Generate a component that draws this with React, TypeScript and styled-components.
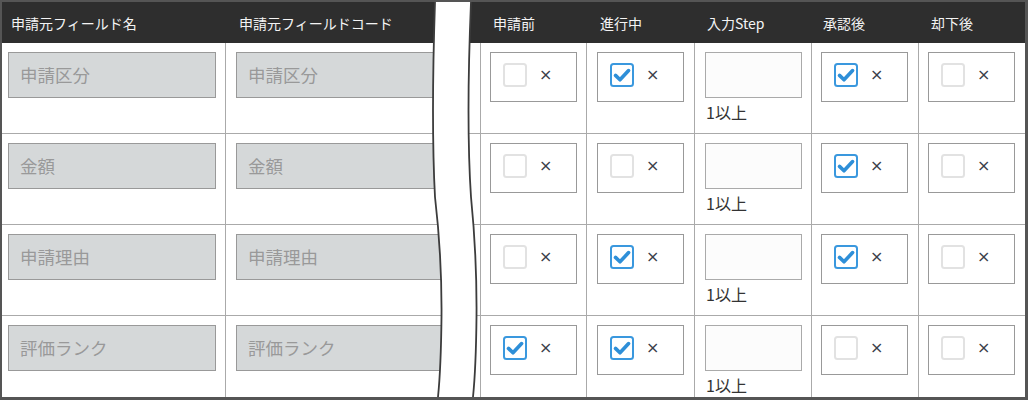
import React from 'react';
import styled, { createGlobalStyle } from 'styled-components';

const GlobalStyle = createGlobalStyle`
  html, body {
    margin: 0;
    padding: 0;
    background: #fff;
  }
  body {
    font-family: "Noto Sans CJK JP", "Noto Sans", sans-serif;
  }
`;

interface Row {
  name: string;
  before: boolean;
  progress: boolean;
  approved: boolean;
  rejected: boolean;
}

const rows: Row[] = [
  { name: '申請区分', before: false, progress: true, approved: true, rejected: false },
  { name: '金額', before: false, progress: false, approved: true, rejected: false },
  { name: '申請理由', before: false, progress: true, approved: true, rejected: false },
  { name: '評価ランク', before: true, progress: true, approved: false, rejected: false },
];

const Frame = styled.div`
  position: relative;
  width: 1028px;
  height: 400px;
  box-sizing: border-box;
  border: 2px solid #555;
  border-right-width: 3px;
  border-bottom-width: 3px;
  overflow: hidden;
  background: #fff;
`;

const Table = styled.div`
  display: grid;
  grid-template-columns: 224px 255px 106px 108px 117px 107px 106px;
  grid-template-rows: 41px repeat(4, 91px);
`;

const HeadCell = styled.div<{ $pad?: number }>`
  display: flex;
  align-items: center;
  padding-left: ${(p) => p.$pad ?? 12}px;
  background: #2e2e2e;
  color: #f4f4f4;
  font-size: 14px;
  font-weight: 400;
  white-space: nowrap;
`;

const Cell = styled.div<{ $pad?: number; $last?: boolean }>`
  box-sizing: border-box;
  padding: 9px 0 0 ${(p) => p.$pad ?? 9}px;
  border-bottom: 1px solid #aaa;
  border-right: ${(p) => (p.$last ? 'none' : '1px solid #aaa')};
  overflow: hidden;
`;

const FieldInput = styled.input<{ $width: number }>`
  box-sizing: border-box;
  width: ${(p) => p.$width}px;
  height: 46px;
  margin: 0;
  padding: 0 0 2px 11px;
  border: 1px solid #999;
  background: #d5d8d9;
  color: #999;
  font-family: "Noto Sans CJK JP", sans-serif;
  font-size: 17.5px;
  outline: none;
`;

const StatusBox = styled.div`
  box-sizing: border-box;
  display: flex;
  align-items: center;
  gap: 12px;
  width: 87px;
  height: 50px;
  padding: 0 0 5px 12px;
  border: 1px solid #999;
`;

const Cross = styled.span`
  color: #3b3f4a;
  font-family: "DejaVu Sans", sans-serif;
  font-size: 16px;
  line-height: 1;
`;

const StepInput = styled.input`
  box-sizing: border-box;
  display: block;
  width: 97px;
  height: 46px;
  margin: 0 0 0 1px;
  border: 1px solid #aaa;
  background: #fcfcfc;
  outline: none;
`;

const Hint = styled.div`
  margin: 4px 0 0 2px;
  color: #333;
  font-size: 16px;
  line-height: 21px;
`;

const BreakMark = styled.svg`
  position: absolute;
  left: 424px;
  top: 0;
  width: 60px;
  height: 395px;
`;

function Check({ checked }: { checked: boolean }) {
  return (
    <svg width="24" height="24" viewBox="0 0 24 24">
      <rect
        x="1"
        y="1"
        width="22"
        height="22"
        rx="2.5"
        fill="#fff"
        stroke={checked ? '#3a98de' : '#e2e2e2'}
        strokeWidth="2"
      />
      {checked && (
        <path
          d="M5.5 12.4 L10 16.8 L18.6 7.6"
          fill="none"
          stroke="#2e8fd8"
          strokeWidth="3.6"
          strokeLinecap="round"
          strokeLinejoin="round"
        />
      )}
    </svg>
  );
}

function Status({ checked }: { checked: boolean }) {
  return (
    <StatusBox>
      <Check checked={checked} />
      <Cross>×</Cross>
    </StatusBox>
  );
}

export default function App() {
  return (
    <>
      <GlobalStyle />
      <Frame>
        <Table>
          <HeadCell $pad={9}>申請元フィールド名</HeadCell>
          <HeadCell $pad={13}>申請元フィールドコード</HeadCell>
          <HeadCell>申請前</HeadCell>
          <HeadCell $pad={13}>進行中</HeadCell>
          <HeadCell>入力Step</HeadCell>
          <HeadCell $pad={11}>承認後</HeadCell>
          <HeadCell>却下後</HeadCell>

          {rows.map((row) => (
            <React.Fragment key={row.name}>
              <Cell $pad={6}>
                <FieldInput $width={208} readOnly value={row.name} />
              </Cell>
              <Cell $pad={10}>
                <FieldInput $width={220} readOnly value={row.name} />
              </Cell>
              <Cell>
                <Status checked={row.before} />
              </Cell>
              <Cell $pad={10}>
                <Status checked={row.progress} />
              </Cell>
              <Cell>
                <StepInput readOnly />
                <Hint>1以上</Hint>
              </Cell>
              <Cell>
                <Status checked={row.approved} />
              </Cell>
              <Cell $last>
                <Status checked={row.rejected} />
              </Cell>
            </React.Fragment>
          ))}
        </Table>

        <BreakMark viewBox="0 0 60 395" preserveAspectRatio="none">
          <path
            d="M9 0 Q5 120 9 195 Q16 255 15.5 315 Q15 365 12 395 L47 395 Q50 365 50.5 315 Q51 255 45 195 Q40 120 45 0 Z"
            fill="#fff"
          />
          <path
            d="M9 0 Q5 120 9 195 Q16 255 15.5 315 Q15 365 12 395"
            fill="none"
            stroke="#3c3c3c"
            strokeWidth="1.8"
          />
          <path
            d="M45 0 Q40 120 45 195 Q51 255 50.5 315 Q50 365 47 395"
            fill="none"
            stroke="#3c3c3c"
            strokeWidth="1.8"
          />
        </BreakMark>
      </Frame>
    </>
  );
}
